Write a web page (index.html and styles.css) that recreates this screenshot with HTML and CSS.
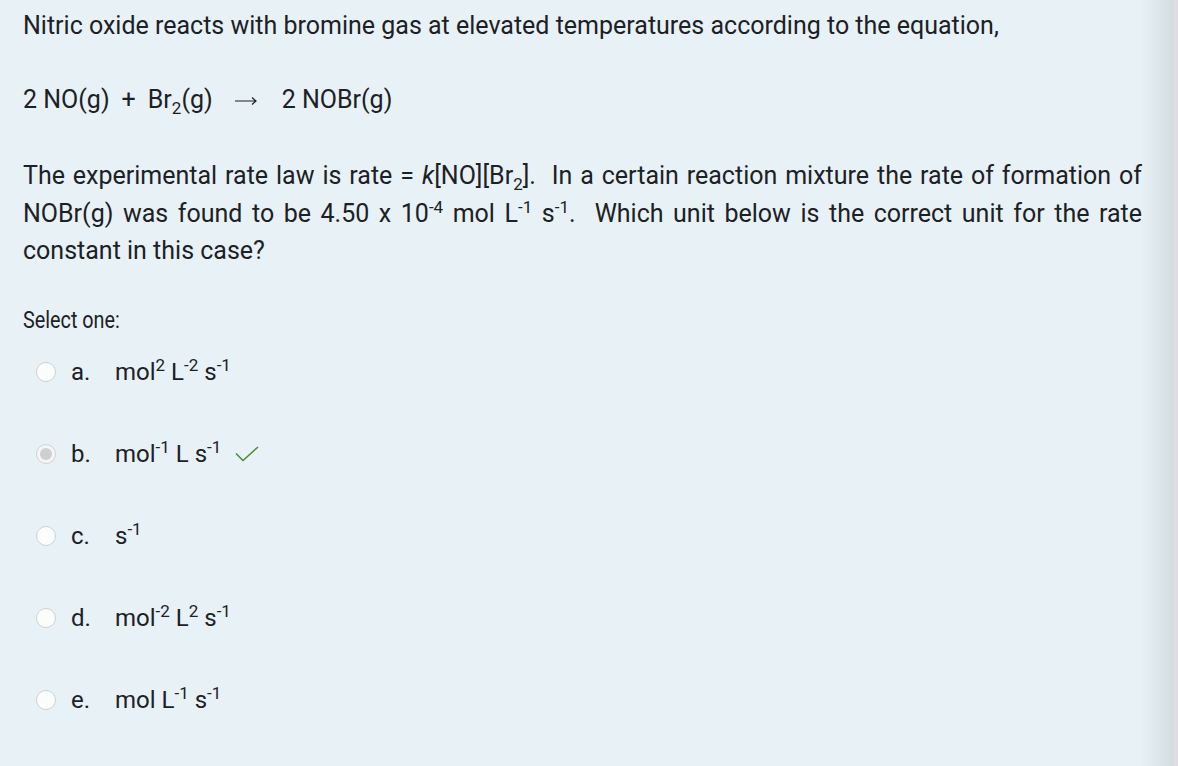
FILE: index.html
```html
<!DOCTYPE html>
<html>
<head>
<meta charset="utf-8">
<link rel="stylesheet" href="styles.css">
</head>
<body>
<div class="page">
  <main class="content">
    <p class="intro">Nitric oxide reacts with bromine gas at elevated temperatures according to the equation,</p>
    <p class="equation"><span>2 NO(g)</span><span class="plus">+</span><span>Br<sub>2</sub>(g)</span><svg class="arrow" width="22" height="10" viewBox="0 0 22 10"><path d="M0 5 H21 M17 1.5 L21 5 L17 8.5" fill="none" stroke="#1b2126" stroke-width="1.2"/></svg><span>2 NOBr(g)</span></p>
    <p class="question">The experimental rate law is rate = <i>k</i>[NO][Br<sub>2</sub>].&nbsp; In a certain reaction mixture the rate of formation of NOBr(g) was found to be 4.50 x 10<sup>-4</sup> mol L<sup>-1</sup> s<sup>-1</sup>.&nbsp; Which unit below is the correct unit for the rate constant in this case?</p>
    <div class="prompt">Select one:</div>
    <div class="answers">
      <label class="option"><span class="radio"></span><span class="letter">a.</span><span class="text">mol<sup>2</sup> L<sup>-2</sup> s<sup>-1</sup></span></label>
      <label class="option"><span class="radio checked"></span><span class="letter">b.</span><span class="text">mol<sup>-1</sup> L s<sup>-1</sup></span><svg class="tick" width="24" height="16" viewBox="0 0 24 16"><path d="M1 7.5 L8 14.5 L23 1" fill="none" stroke="#4e8a3a" stroke-width="1.5"/></svg></label>
      <label class="option"><span class="radio"></span><span class="letter">c.</span><span class="text">s<sup>-1</sup></span></label>
      <label class="option"><span class="radio"></span><span class="letter">d.</span><span class="text">mol<sup>-2</sup> L<sup>2</sup> s<sup>-1</sup></span></label>
      <label class="option"><span class="radio"></span><span class="letter">e.</span><span class="text">mol L<sup>-1</sup> s<sup>-1</sup></span></label>
    </div>
  </main>
  <div class="edge"></div>
</div>
</body>
</html>
```
FILE: styles.css
```css
html, body {
  margin: 0;
  padding: 0;
  height: 100%;
}
body {
  font-family: Roboto, "Liberation Sans", sans-serif;
  color: #1b2126;
  background: #e8f1f5;
}
.page {
  display: flex;
  height: 766px;
  overflow: hidden;
}
.content {
  flex: 1;
  padding: 9px 31px 0 23px;
  background: linear-gradient(to right, #e8f1f5 0, #e8f1f5 calc(100% - 32px), #d3dde1 100%);
  font-size: 25px;
}
p {
  margin: 0;
}
.intro {
  line-height: 34px;
}
.equation {
  margin-top: 40px;
  line-height: 34px;
  display: flex;
  align-items: baseline;
}
.plus {
  margin: 0 12px;
}
.arrow {
  margin: 0 25px 0 22px;
  align-self: center;
  position: relative;
  top: 1px;
}
sub, sup {
  font-size: 17px;
  line-height: 0;
}
.question {
  margin-top: 40px;
  line-height: 37.5px;
  text-align: justify;
}
.prompt {
  margin-top: 36px;
  font-size: 23px;
  line-height: 30px;
  transform: scaleX(0.86);
  transform-origin: left;
}
.answers {
  margin-top: 19px;
  display: flex;
  flex-direction: column;
  gap: 47px;
  font-size: 24px;
}
.option {
  display: flex;
  align-items: center;
  height: 35px;
}
.radio {
  width: 20px;
  height: 20px;
  border: 1.5px solid #cfd2d3;
  border-radius: 50%;
  background: #fbfcfc;
  margin-left: 13px;
  margin-right: 15px;
  box-sizing: border-box;
  display: flex;
  align-items: center;
  justify-content: center;
}
.radio.checked {
  background: #f4f5f5;
}
.radio.checked::after {
  content: "";
  width: 12px;
  height: 12px;
  border-radius: 50%;
  background: #cdcfd0;
}
.letter {
  width: 44px;
}
.tick {
  margin-left: 14px;
}
.edge {
  width: 5px;
  background: #dcdedf;
}
```
